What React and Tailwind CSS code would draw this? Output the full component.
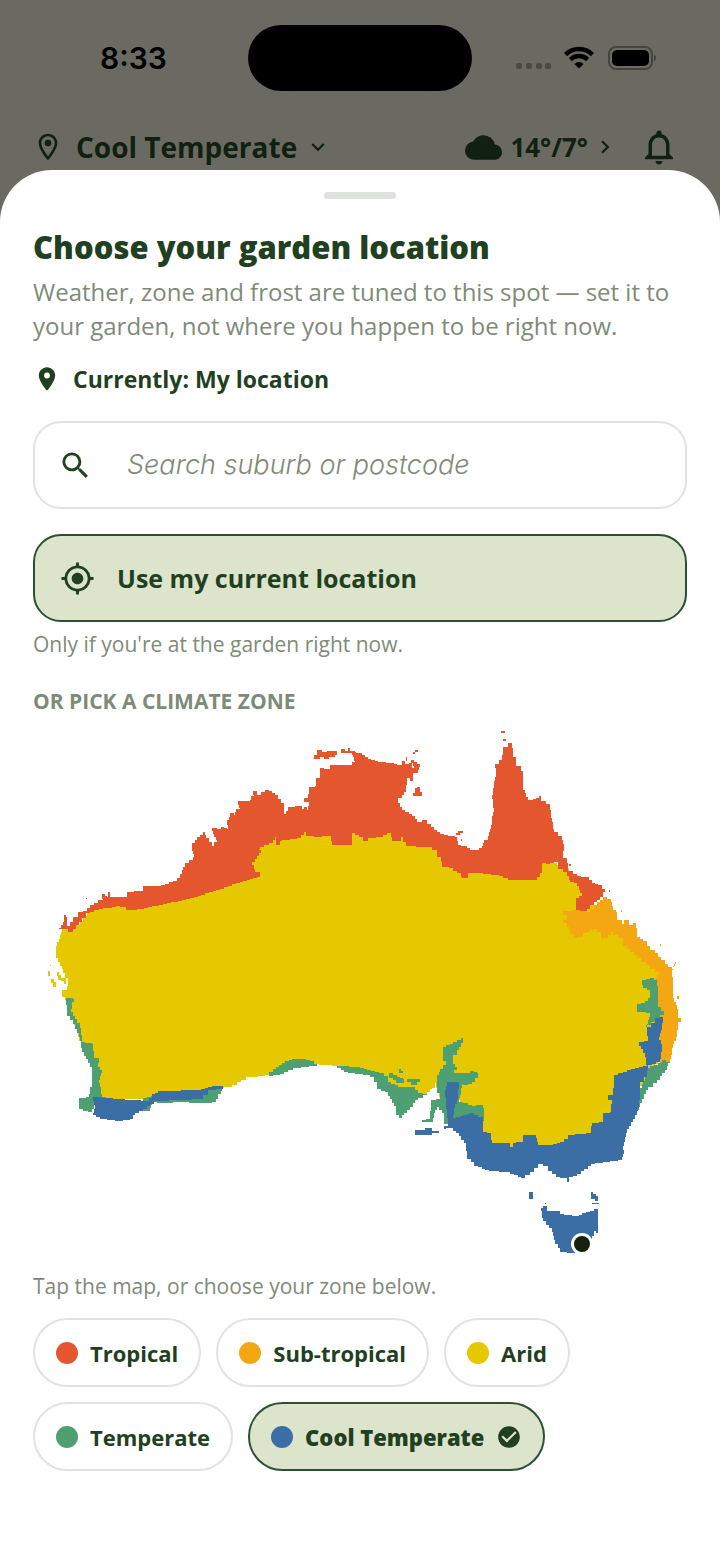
import React, { useState } from "react";
import {
  MdCheckCircle,
  MdChevronRight,
  MdCloud,
  MdExpandMore,
  MdLocationOn,
  MdMyLocation,
  MdNotificationsNone,
  MdOutlineLocationOn,
  MdSearch,
} from "react-icons/md";

const zones = [
  { name: "Tropical", dot: "bg-[#e4572e]" },
  { name: "Sub-tropical", dot: "bg-[#f4a712]" },
  { name: "Arid", dot: "bg-[#e6c800]" },
  { name: "Temperate", dot: "bg-[#4ea072]" },
  { name: "Cool Temperate", dot: "bg-[#3b6ea5]" },
];

// Later regions are painted over earlier ones
const regions = [
  {
    zone: "Arid",
    color: "#e6c800",
    shapes: [
      "62,929 73,929 90,908 123,902 160,897 200,880 250,860 256,840 310,825 400,830 440,845 470,865 540,870 541,858 565,868 590,890 590,905 640,945 660,965 660,1060 640,1090 600,1140 500,1160 480,1150 460,1100 445,1100 440,1097 438,1088 436,1083 435,1088 432,1089 427,1095 418,1095 395,1086 370,1072 337,1066 332,1065 315,1064 297,1062 280,1070 265,1076 250,1077 241,1082 232,1087 220,1088 150,1099 96,1100 94,1060 82,1045 68,1000 62,993 62,990 67,986 68,978 65,973 60,962 56,953 56,946 60,935",
      "48,971 50,971 50,976 48,976",
      "51,979 54,979 54,982 56,982 56,987 53,987 53,983 51,983",
      "57,972 59,972 59,975 61,975 61,980 58,980",
      "61,978 66,978 66,984 64,984 64,981 61,981",
      "50,965 51,965 51,966 50,966",
    ],
  },
  {
    zone: "Tropical",
    color: "#e4572e",
    shapes: [
      "59,928 63,922 64,915 66,917 67,926 73,917 78,912 83,911 90,905 98,900 103,899 102,894 105,896 107,897 108,892 110,897 123,897 127,892 138,891 143,886 157,886 173,881 180,874 185,863 193,857 194,854 192,848 192,843 197,837 203,832 206,838 212,846 214,842 217,840 214,834 212,828 217,829 221,827 227,829 228,825 227,820 230,813 234,815 236,809 240,808 238,801 244,801 250,800 251,796 254,799 253,791 257,795 261,792 265,790 269,791 275,795 281,803 284,805 284,814 288,807 298,806 302,809 304,807 307,810 309,802 304,798 308,794 309,787 315,786 316,778 320,775 320,768 328,769 330,765 352,765 352,762 355,761 353,752 359,753 365,757 371,760 378,762 390,763 397,765 402,761 407,757 405,764 409,763 412,768 414,766 411,760 417,764 420,767 418,773 413,775 413,781 410,778 407,782 406,792 402,798 398,803 402,810 412,816 417,822 422,820 427,824 434,830 440,834 455,837 458,845 464,846 470,850 475,850 482,846 484,840 488,836 491,825 492,816 494,808 492,795 493,788 495,777 496,771 495,764 499,760 502,755 503,747 508,743 512,748 513,757 516,760 516,766 521,771 523,775 523,790 528,800 533,799 539,796 541,801 550,806 551,818 554,832 562,840 564,848 563,858 567,863 568,871 577,876 585,877 592,883 598,885 605,892 603,897 597,902 587,912 576,909 576,898 582,893 577,883 570,880 567,872 558,866 558,862 550,864 542,862 542,873 537,880 512,880 503,876 483,873 470,873 468,878 462,877 461,873 453,868 442,866 441,857 437,855 437,850 432,847 408,846 403,837 401,841 392,841 391,833 383,837 369,838 368,841 364,841 363,837 355,833 352,833 352,845 332,845 331,836 318,837 306,835 306,832 301,838 282,841 280,845 276,844 276,837 273,843 260,849 257,846 261,853 257,859 252,865 255,872 260,873 260,877 250,880 240,883 220,890 190,899 163,905 137,910 128,910 127,913 126,907 120,906 103,909 90,913 82,922 73,932 68,929",
      "314,755 317,755 317,750 322,750 322,752 327,752 327,751 337,751 337,755 335,755 335,757 329,757 329,759 324,759 324,757 320,757 320,759 314,759",
      "341,749 345,749 345,751 348,751 348,748 350,748 350,751 355,751 355,755 352,755 352,753 341,753",
      "413,752 415,752 415,750 418,750 418,752 415,752 415,754 413,754",
      "413,793 415,793 415,788 417,788 417,787 420,787 420,792 422,792 422,796 413,796",
      "456,833 458,833 458,831 463,831 463,833 460,833 460,835 456,835",
      "461,839 462,839 462,841 461,841",
      "501,731 505,731 505,733 501,733",
      "503,739 506,739 506,741 503,742",
      "569,864 571,864 571,866 569,866",
      "609,890 610,890 610,892 609,892",
      "86,898 87,898 87,899 86,899",
    ],
  },
  {
    zone: "Sub-tropical",
    color: "#f4a712",
    shapes: [
      "563,911 576,910 587,912 597,902 603,897 607,899 611,902 613,910 616,912 617,920 622,924 624,920 629,925 633,923 636,928 637,937 643,941 650,950 655,953 661,960 668,967 672,970 674,964 676,962 672,973 673,985 673,998 678,1012 678,1018 681,1022 678,1026 677,1037 673,1048 670,1062 659,1063 661,1050 659,1040 661,1030 661,1020 656,1005 657,987 655,978 659,972 650,965 637,955 623,943 623,938 618,935 613,932 608,938 603,941 601,932 597,929 587,933 583,937 578,938 570,930 567,923 563,920 567,915",
      "621,910 622,910 622,912 621,912",
      "660,944 661,944 661,946 660,946",
      "677,996 679,996 679,999 677,999",
    ],
  },
  {
    zone: "Temperate",
    color: "#4ea072",
    shapes: [
      "66,998 76,999 72,1005 71,1012 77,1023 80,1028 82,1042 92,1044 94,1058 99,1058 98,1067 102,1073 99,1083 102,1097 116,1104 95,1105 92,1112 79,1108 79,1098 89,1097 90,1087 92,1085 92,1067 82,1048 79,1033 73,1020 67,1012",
      "222,1088 221,1094 218,1099 216,1102 207,1103 201,1103 185,1102 165,1103 157,1102 152,1105 150,1111 142,1111 143,1098 158,1094 205,1089",
      "265,1076 269,1072 273,1069 279,1065 285,1061 292,1059 302,1059 310,1061 317,1066 297,1068 288,1072 280,1075",
      "337,1066 357,1067 367,1070 379,1073 388,1078 388,1082 398,1087 412,1087 418,1093 427,1095 418,1100 410,1110 404,1115 402,1118 396,1112 396,1106 392,1099 388,1092 381,1089 377,1087 377,1082 374,1077 370,1075 348,1072",
      "389,1073 393,1073 393,1075 397,1075 397,1077 403,1079 404,1083 396,1083 396,1080 393,1078",
      "399,1069 401,1069 401,1071 403,1071 403,1073 400,1073",
      "407,1079 420,1079 420,1082 417,1082 417,1085 413,1085 411,1082",
      "461,1038 463,1043 459,1050 457,1055 453,1060 453,1064 457,1070 454,1073 466,1073 470,1071 477,1073 478,1078 475,1082 468,1085 463,1084 459,1102 472,1106 483,1104 484,1121 452,1121 444,1127 444,1113 439,1107 435,1113 433,1122 420,1122 422,1120 430,1118 431,1100 440,1097 443,1097 437,1088 437,1075 440,1069 446,1061 443,1056 443,1047 453,1042",
      "642,980 650,978 657,982 658,998 658,1007 664,1015 655,1022 646,1027 650,1013 637,1011 637,1004 645,1001 650,995 650,990 643,985",
      "658,1063 662,1060 670,1063 665,1073 657,1083 648,1090 642,1103 637,1114 638,1100 640,1088 645,1077 646,1068",
    ],
  },
  {
    zone: "Cool Temperate",
    color: "#3b6ea5",
    shapes: [
      "93,1097 117,1099 145,1101 152,1094 158,1091 197,1090 212,1086 224,1086 223,1089 209,1090 208,1095 203,1099 157,1101 143,1111 135,1115 133,1119 123,1121 103,1119 93,1113 95,1105",
      "447,1082 459,1082 458,1100 455,1108 453,1118 463,1115 470,1113 478,1117 483,1120 483,1132 490,1133 492,1143 505,1143 510,1147 513,1143 523,1141 523,1135 535,1135 538,1145 550,1145 560,1142 568,1135 590,1133 592,1123 602,1122 603,1113 610,1112 612,1100 608,1095 613,1092 614,1075 627,1070 647,1065 645,1053 639,1042 648,1040 647,1027 655,1018 663,1016 662,1030 659,1040 662,1048 660,1062 648,1067 647,1077 640,1086 640,1100 637,1115 627,1133 623,1150 624,1154 622,1160 595,1164 577,1176 569,1178 569,1182 567,1182 567,1178 560,1177 552,1171 547,1171 548,1166 543,1164 538,1168 530,1175 525,1178 510,1172 492,1171 478,1166 467,1155 466,1143 459,1133 453,1128 439,1129 448,1122 447,1113 446,1100 445,1090",
      "415,1130 425,1130 425,1128 432,1128 432,1131 439,1131 439,1133 432,1133 432,1135 417,1135",
      "541,1208 543,1206 547,1208 547,1211 555,1211 560,1214 568,1215 575,1216 582,1213 590,1211 594,1209 598,1211 598,1227 598,1233 596,1231 592,1240 580,1253 563,1252 555,1240 552,1228 543,1218",
      "529,1192 533,1192 533,1199 529,1199",
      "591,1192 593,1192 593,1194 596,1196 598,1201 595,1201 595,1199 591,1197",
      "592,1203 599,1203 599,1204 592,1204",
      "545,1203 546,1203 546,1204 545,1204",
    ],
  },
];

// Walks the outline in small right-angled steps, so the regions read as grid cells
function gridPath(shape) {
  const points = shape.split(" ").map((p) => p.split(",").map(Number));
  let d = `M${points[0][0]} ${points[0][1]}`;
  points.forEach(([x1, y1], i) => {
    const [x2, y2] = points[(i + 1) % points.length];
    const steps = Math.max(1, Math.round(Math.max(Math.abs(x2 - x1), Math.abs(y2 - y1)) / 4));
    for (let s = 1; s <= steps; s++) {
      const x = Math.round(x1 + ((x2 - x1) * s) / steps);
      const y = Math.round(y1 + ((y2 - y1) * s) / steps);
      d += `H${x}V${y}`;
    }
  });
  return d + "Z";
}

function ClimateMap({ onPick }) {
  return (
    <svg viewBox="33 727 654 531" className="block w-full h-auto" role="img" aria-label="Climate zones of Australia">
      {regions.map((r) => (
        <path
          key={r.zone}
          d={r.shapes.map(gridPath).join("")}
          fill={r.color}
          shapeRendering="crispEdges"
          onClick={() => onPick(r.zone)}
        />
      ))}
      <circle cx="582" cy="1244" r="11" fill="#fff" />
      <circle cx="582" cy="1244" r="8" fill="#14210f" />
    </svg>
  );
}

function StatusBar() {
  return (
    <div className="grid grid-cols-[1fr_224px_1fr] h-[66px] items-center">
      <span className="pl-[100px] font-['Inter'] font-semibold text-[30px] leading-8 text-black">8:33</span>
      <div className="h-full rounded-full bg-black" />
      <div className="flex items-center justify-end gap-3 pr-16">
        <svg width="36" height="24" viewBox="0 0 36 24" fill="#4a4a45">
          <rect x="0" y="17" width="6" height="6" rx="2" />
          <rect x="10" y="17" width="6" height="6" rx="2" />
          <rect x="20" y="17" width="6" height="6" rx="2" />
          <rect x="29" y="17" width="6" height="6" rx="2" />
        </svg>
        <svg width="30" height="24" viewBox="0 0 30 24" fill="none" stroke="#000" strokeWidth="4.4">
          <path d="M1.6 8.6a19 19 0 0 1 26.8 0" />
          <path d="M6.4 13.6a12.2 12.2 0 0 1 17.2 0" />
          <path d="M15 22.6l-4.6-4.7a6.6 6.6 0 0 1 9.2 0z" fill="#000" stroke="none" />
        </svg>
        <svg width="50" height="24" viewBox="0 0 50 24">
          <rect x="3" y="1" width="43" height="22" rx="7" fill="none" stroke="#44443f" strokeWidth="2" />
          <rect x="6" y="4" width="37" height="16" rx="5" fill="#000" />
          <path d="M48 8.5c2.6 1 2.6 6 0 7z" fill="#44443f" />
        </svg>
      </div>
    </div>
  );
}

export default function App() {
  const [zone, setZone] = useState("Cool Temperate");

  return (
    <div className="min-h-screen flex flex-col bg-[#6a6a62] font-['Open_Sans',sans-serif] text-[#21401f]">
      {/* Dimmed home header */}
      <header className="pt-[25px] pb-0.5">
        <StatusBar />
        <div className="mt-[35px] h-[42px] px-8 flex items-center justify-between text-[#112010]">
          <button className="flex items-center gap-3 text-[28px] leading-10 font-bold">
            <MdOutlineLocationOn size={32} />
            <span>Cool Temperate</span>
            <MdExpandMore size={26} className="-ml-1" />
          </button>
          <div className="flex items-center gap-5 pr-2">
            <button className="flex items-center gap-2 text-[26px] leading-10 font-bold">
              <MdCloud size={37} />
              <span>14°/7°</span>
              <MdChevronRight size={26} className="-ml-1" />
            </button>
            <button aria-label="Notifications">
              <MdNotificationsNone size={42} />
            </button>
          </div>
        </div>
      </header>

      {/* Location sheet */}
      <main className="flex-1 bg-white rounded-t-[52px] px-[33px] pt-[22px] pb-8">
        <div className="mx-auto w-[72px] h-[7px] rounded-full bg-[#dde2dd]" />

        <h1 className="mt-7 text-[31px] leading-10 font-extrabold">Choose your garden location</h1>
        <p className="mt-2 text-[24px] leading-[34px] text-[#7f8a78]">
          Weather, zone and frost are tuned to this spot — set it to your garden, not where you happen to be right now.
        </p>

        <div className="mt-5 h-8 flex items-center gap-3">
          <MdLocationOn size={28} />
          <span className="text-[23px] leading-8 font-bold">Currently: My location</span>
        </div>

        <label className="mt-[26px] h-[88px] flex items-center gap-[34px] px-[23px] rounded-[28px] border-2 border-[#e0e3e0]">
          <MdSearch size={35} className="shrink-0" />
          <input
            type="text"
            aria-label="Search suburb or postcode"
            placeholder="Search suburb or postcode"
            className="flex-1 min-w-0 bg-transparent outline-none font-['Inter'] text-[27px] leading-9 placeholder:italic placeholder:font-light placeholder:text-[#7f8a78]"
          />
        </label>

        <button className="mt-[25px] w-full h-[88px] flex items-center gap-[22px] px-[25px] rounded-[28px] border-2 border-[#2f4f33] bg-[#dce4cc] text-[25px] leading-9 font-bold">
          <MdMyLocation size={35} />
          Use my current location
        </button>
        <p className="mt-2 text-[21px] leading-7 text-[#7f8a78]">Only if you're at the garden right now.</p>

        <h2 className="mt-[29px] mb-3 text-[21px] leading-7 font-bold text-[#7f8a78]">OR PICK A CLIMATE ZONE</h2>
        <ClimateMap onPick={setZone} />
        <p className="mt-[14px] text-[21px] leading-7 text-[#7f8a78]">Tap the map, or choose your zone below.</p>

        <div className="mt-[18px] flex flex-wrap gap-[15px]">
          {zones.map((z) => {
            const active = z.name === zone;
            return (
              <button
                key={z.name}
                aria-pressed={active}
                onClick={() => setZone(z.name)}
                className={`h-[69px] px-[21px] flex items-center gap-3 rounded-full border-2 text-[22px] leading-8 ${
                  active ? "border-[#2f4f33] bg-[#dce4cc] font-extrabold" : "border-[#e0e3e0] bg-white font-bold"
                }`}
              >
                <span className={`size-[22px] rounded-full ${z.dot}`} />
                {z.name}
                {active && <MdCheckCircle size={26} />}
              </button>
            );
          })}
        </div>
      </main>
    </div>
  );
}
